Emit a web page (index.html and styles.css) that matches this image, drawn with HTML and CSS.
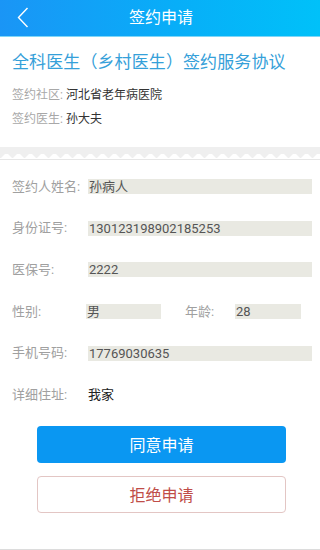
FILE: index.html
```html
<!DOCTYPE html>
<html lang="zh-CN">
<head>
<meta charset="utf-8">
<title>签约申请</title>
<link rel="stylesheet" href="styles.css">
</head>
<body>
<div class="page">
  <header class="topbar">
    <span class="back">
      <svg width="12" height="21" viewBox="0 0 12 21"><polyline points="10.5,1 1.5,10.5 10.5,20" fill="none" stroke="#ffffff" stroke-width="1.4"/></svg>
    </span>
    <h1 class="topbar-title">签约申请</h1>
  </header>

  <section class="intro">
    <h2 class="agree-title">全科医生（乡村医生）签约服务协议</h2>
    <p class="info"><span class="info-label">签约社区:</span> <span class="info-value">河北省老年病医院</span></p>
    <p class="info"><span class="info-label">签约医生:</span> <span class="info-value">孙大夫</span></p>
  </section>

  <div class="divider">
    <div class="divider-band"></div>
    <svg class="divider-teeth" width="100%" height="5" preserveAspectRatio="none">
      <defs>
        <pattern id="teeth" width="12" height="5" patternUnits="userSpaceOnUse">
          <rect width="12" height="5" fill="#efefef"/>
          <polygon points="1,5 5,1 8,1 12,5" fill="#ffffff"/>
        </pattern>
      </defs>
      <rect width="100%" height="5" fill="url(#teeth)"/>
    </svg>
    <div class="divider-line"></div>
  </div>

  <section class="form">
    <div class="row">
      <span class="label">签约人姓名:</span>
      <span class="field field-wide">孙病人</span>
    </div>
    <div class="row">
      <span class="label">身份证号:</span>
      <span class="field field-wide">130123198902185253</span>
    </div>
    <div class="row">
      <span class="label">医保号:</span>
      <span class="field field-wide">2222</span>
    </div>
    <div class="row">
      <span class="label label-sex">性别:</span>
      <span class="field field-sex">男</span>
      <span class="label label-age">年龄:</span>
      <span class="field field-age">28</span>
    </div>
    <div class="row">
      <span class="label">手机号码:</span>
      <span class="field field-wide">17769030635</span>
    </div>
    <div class="row">
      <span class="label">详细住址:</span>
      <span class="plain">我家</span>
    </div>
  </section>

  <div class="actions">
    <button class="btn btn-agree">同意申请</button>
    <button class="btn btn-reject">拒绝申请</button>
  </div>
</div>
</body>
</html>
```
FILE: styles.css
```css
* { box-sizing: border-box; }
html, body {
  margin: 0;
  padding: 0;
  background: #ffffff;
}
body {
  font-family: Roboto, "Noto Sans CJK SC", "Noto Sans", sans-serif;
  color: #333333;
}
.page {
  height: 550px;
  border-bottom: 1px solid #dcdcdc;
  overflow: hidden;
}
.topbar {
  height: 37px;
  background: linear-gradient(90deg, #1a95f6 0%, #08aef8 55%, #00c1f9 100%);
  border-bottom: 1px solid #7fd6f7;
  display: flex;
  align-items: center;
  justify-content: center;
  position: relative;
}
.back {
  position: absolute;
  left: 17px;
  top: 7px;
  display: flex;
}
.topbar-title {
  margin: 0;
  font-size: 16px;
  font-weight: normal;
  color: #ffffff;
  line-height: 20px;
  margin-left: 2px;
}
.intro {
  padding: 13px 12px 0;
}
.agree-title {
  margin: 0 0 9px;
  font-size: 17px;
  font-weight: normal;
  line-height: 24px;
  color: #35a0d9;
  letter-spacing: 0.1px;
}
.info {
  margin: 0;
  font-size: 12px;
  line-height: 24px;
}
.info-label { color: #a8a8a8; }
.info-value { color: #333333; }
.divider {
  margin-top: 16px;
}
.divider-band {
  height: 6px;
  background: #efefef;
}
.divider-teeth {
  display: block;
}
.divider-line {
  height: 1px;
  margin-top: 1px;
  background: #e6e6e6;
}
.form {
  padding: 6px 0 0 12px;
}
.row {
  height: 41.6px;
  display: flex;
  align-items: center;
  font-size: 13px;
}
.label {
  width: 76px;
  flex: none;
  color: #a0a0a0;
  line-height: 16px;
}
.label-sex { width: 74px; }
.label-age { width: 50px; margin-left: 24px; }
.field {
  height: 15px;
  line-height: 15px;
  background: #e9e9e2;
  color: #555555;
  padding-left: 1px;
  font-size: 13px;
}
.field-wide { width: 224px; }
.field-sex { width: 75px; }
.field-age { width: 66px; }
.plain {
  color: #222222;
  line-height: 16px;
}
.actions {
  padding: 10px 0 0 37px;
  display: flex;
  flex-direction: column;
  gap: 13px;
}
.btn {
  width: 249px;
  height: 37px;
  border-radius: 4px;
  font-family: Roboto, "Noto Sans CJK SC", "Noto Sans", sans-serif;
  font-size: 16px;
  padding: 0;
  margin: 0;
}
.btn-agree {
  background: #0a97f2;
  border: none;
  color: #ffffff;
}
.btn-reject {
  background: #ffffff;
  border: 1px solid #e3c6c4;
  color: #c04d48;
}
```
